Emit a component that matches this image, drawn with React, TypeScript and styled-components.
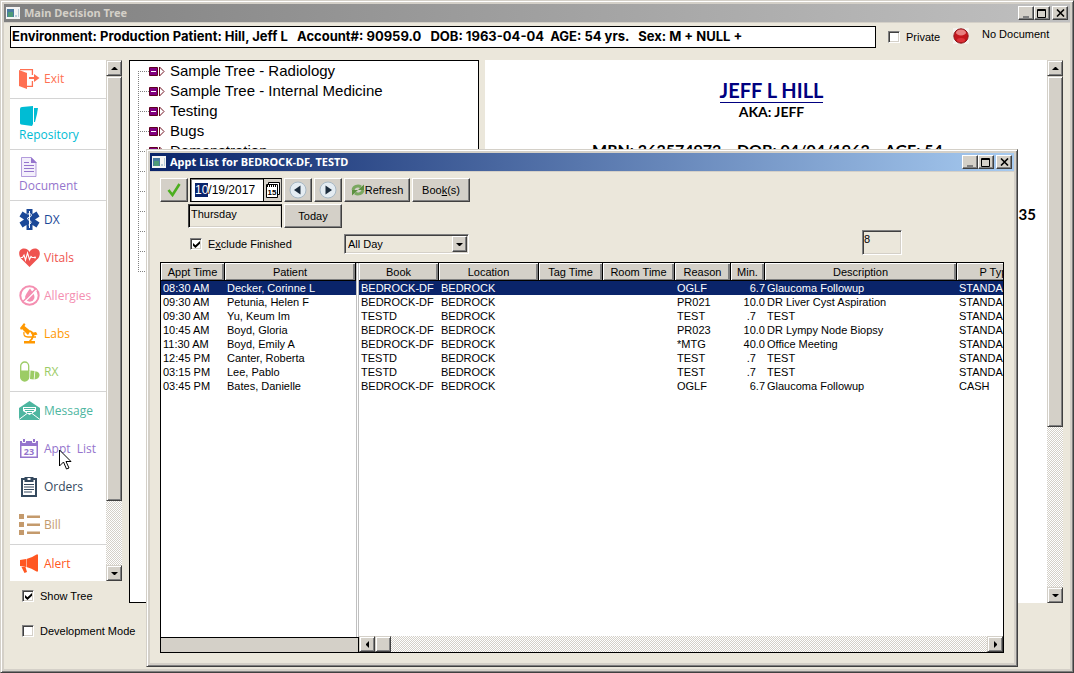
import React, { useEffect, useRef } from 'react';
import styled, { createGlobalStyle, css } from 'styled-components';

const face = '#d4d0c8';
const ground = '#ebe7db';
const navy = '#0a246a';
const sans = '"Liberation Sans", Arial, sans-serif';
const humanist = '"Open Sans", "Noto Sans", sans-serif';

const GlobalStyle = createGlobalStyle`
  * { box-sizing: border-box; }
  body { margin: 0; background: ${ground}; font: 11px/14px ${sans}; color: #000; }
  button, input, select { font: inherit; color: inherit; margin: 0; }
`;

const raised = css`
  border: 1px solid;
  border-color: #fff #404040 #404040 #fff;
  box-shadow: inset -1px -1px #808080;
`;
const raisedSoft = css`
  border: 1px solid;
  border-color: ${face} #404040 #404040 ${face};
  box-shadow: inset 1px 1px #fff, inset -1px -1px #808080;
`;
const sunken = css`
  border: 1px solid;
  border-color: #808080 #fff #fff #808080;
  box-shadow: inset 1px 1px #404040, inset -1px -1px ${face};
`;

const Frame = styled.div`
  display: flex;
  flex-direction: column;
  background: ${ground};
  padding: 3px;
  border: 1px solid;
  border-color: ${face} #404040 #404040 ${face};
  box-shadow: inset 1px 1px #fff, inset -1px -1px #808080, inset 0 0 0 3px ${face};
`;
const MainWindow = styled(Frame)`
  height: 100vh;
  position: relative;
`;
const Dialog = styled(Frame)`
  position: absolute;
  left: 145px;
  right: 55px;
  top: 148px;
  bottom: 5px;
`;

const TitleBar = styled.header<{ $active?: boolean }>`
  display: flex;
  align-items: center;
  height: 19px;
  flex: none;
  padding: 0 2px;
  border-bottom: 1px solid ${face};
  background: ${p => (p.$active ? `linear-gradient(90deg, ${navy}, #a6caf0)` : 'linear-gradient(90deg, #808080, #c0c0c0)')};
  color: ${p => (p.$active ? '#fff' : face)};
`;
const TitleText = styled.h1`
  flex: 1;
  margin: 0 0 0 4px;
  font: bold 11px/18px "Noto Sans", "Open Sans", sans-serif;
`;
const CaptionButton = styled.button`
  width: 16px;
  height: 14px;
  padding: 0;
  background: ${face};
  display: grid;
  place-items: center;
  ${raised}
  &:last-child { margin-left: 2px; }
`;

const TopRow = styled.div`
  display: flex;
  align-items: flex-start;
  padding: 3px 6px 0;
  height: 37px;
  flex: none;
`;
const Banner = styled.output`
  width: 866px;
  flex: 0 1 auto;
  height: 22px;
  border: 1px solid #000;
  background: #fff;
  font: bold 13px/18px Inter, "Liberation Sans", sans-serif;
  padding-left: 1px;
  white-space: pre;
  overflow: hidden;
`;
const CheckLabel = styled.label`
  display: flex;
  align-items: center;
  gap: 6px;
  height: 22px;
  white-space: nowrap;
`;
const CheckBox = styled.input`
  appearance: none;
  width: 12px;
  height: 12px;
  flex: none;
  background: #fff;
  position: relative;
  ${sunken}
  &:checked::after {
    content: '';
    position: absolute;
    inset: 2px 1px 1px 2px;
    background: #000;
    clip-path: polygon(0 28%, 35% 60%, 100% 0, 100% 40%, 35% 100%, 0 68%);
  }
`;
const PrivateLabel = styled(CheckLabel)`
  width: 65px;
  margin-left: 12px;
`;
const Lamp = styled.svg`
  margin: 2px 13px 0 0;
  flex: none;
`;
const Status = styled.span`
  line-height: 16px;
  white-space: nowrap;
`;

const Workspace = styled.div`
  flex: 1;
  min-height: 0;
  display: grid;
  grid-template-columns: 112px 350px 1fr;
  padding: 0 7px 0 6px;
`;
const Side = styled.aside`
  display: flex;
  flex-direction: column;
  min-height: 0;
  padding-bottom: 27px;
`;
const SideScroller = styled.div`
  flex: 1;
  min-height: 0;
  display: flex;
  background: #fff;
`;
const Nav = styled.nav`
  flex: 1;
  overflow: hidden;
`;
const NavGroup = styled.div`
  border-bottom: 1px solid #d4d4d4;
`;
const NavItem = styled.a<{ $tone: string; $stacked?: boolean }>`
  display: flex;
  flex-direction: ${p => (p.$stacked ? 'column' : 'row')};
  align-items: ${p => (p.$stacked ? 'flex-start' : 'center')};
  justify-content: ${p => (p.$stacked ? 'flex-end' : 'flex-start')};
  gap: ${p => (p.$stacked ? '0' : '4px')};
  height: ${p => (p.$stacked ? '50px' : '38px')};
  padding: 0 0 ${p => (p.$stacked ? '6px' : '1px')} 9px;
  color: ${p => p.$tone};
  font: 12px/16px ${humanist};
  text-decoration: none;
  white-space: pre;
  svg { flex: none; }
`;
const SideChecks = styled.div`
  display: flex;
  flex-direction: column;
  gap: 13px;
  padding: 4px 0 0 12px;
`;

const ScrollBox = styled.div<{ $row?: boolean }>`
  display: flex;
  flex: none;
  flex-direction: ${p => (p.$row ? 'row' : 'column')};
  ${p => (p.$row ? 'height: 16px;' : 'width: 16px;')}
  background: conic-gradient(#fff 25%, ${face} 0 50%, #fff 0 75%, ${face} 0) 0 0 / 2px 2px;
`;
const ScrollButton = styled.button`
  width: 16px;
  height: 16px;
  flex: none;
  padding: 0;
  display: grid;
  place-items: center;
  background: ${face};
  ${raisedSoft}
`;
const Thumb = styled.div<{ $grow: number; $base?: number }>`
  flex: ${p => p.$grow} 0 ${p => p.$base ?? 0}px;
  background: ${face};
  ${raisedSoft}
`;
const Rest = styled.div<{ $grow: number }>`
  flex: ${p => p.$grow} 0 0;
`;

const TreePanel = styled.ul`
  margin: 0 -7px 66px 7px;
  padding: 0 0 0 8px;
  list-style: none;
  background: #fff;
  border: 1px solid #000;
  overflow: hidden;
`;
const TreeRow = styled.li`
  display: flex;
  align-items: center;
  height: 20px;
  font: 15px/20px ${sans};
  gap: 4px;
  svg { flex: none; }
`;
const DocPanel = styled.section`
  margin: 0 0 66px 13px;
  background: #fff;
  display: flex;
  min-width: 0;
`;
const DocPage = styled.article`
  flex: 1;
  overflow: hidden;
  padding: 16px 0 0 11px;
  text-align: center;
  font: bold 14px/20px Lato, ${humanist};
  white-space: pre;
  h2 { margin: 0; font-size: 20px; line-height: 28px; color: #000080; }
  h2 span { border-bottom: 1px solid #000080; }
  p { margin: 0; line-height: 16px; }
`;
const DocIds = styled.p`
  && { margin: 18px 0 0; font-size: 16px; line-height: 24px; padding-right: 8px; }
`;
const DocPhone = styled.p`
  && { margin: 42px 11px 0 0; font-size: 15px; line-height: 20px; text-align: right; }
`;

const DialogBody = styled.div`
  flex: 1;
  min-height: 0;
  display: flex;
  flex-direction: column;
  padding: 6px 10px 10px;
`;
const Tools = styled.div`
  display: grid;
  grid-template-columns: 28px 92px 28px 28px 66px 58px 1fr;
  grid-template-rows: 24px 24px 26px;
  gap: 2px;
  margin-bottom: 6px;
`;
const ToolButton = styled.button<{ $span?: number }>`
  grid-column: span ${p => p.$span ?? 1};
  background: ${face};
  padding: 0;
  display: flex;
  align-items: center;
  justify-content: center;
  ${raised}
`;
const DateField = styled.div`
  display: flex;
  align-items: center;
  background: #fff;
  border: 1px solid #000;
  border-right-color: #404040;
  box-shadow: inset 1px 1px #808080;
`;
const DateInput = styled.input`
  flex: 1;
  min-width: 0;
  height: 20px;
  padding: 0 0 0 4px;
  border: 0;
  background: none;
  outline: 0;
  caret-color: transparent;
  font-size: 12px;
  &::selection { background: ${navy}; color: #fff; }
`;
const PickerButton = styled.button`
  width: 18px;
  height: 22px;
  padding: 0 0 0 1px;
  background: ${face};
  border: 0;
  border-left: 1px solid #000;
  display: grid;
  place-items: center;
`;
const DayName = styled.input`
  grid-column: 2;
  justify-self: end;
  width: 94px;
  background: ${ground};
  padding: 0 2px 4px;
  outline: 0;
  border: 1px solid;
  border-color: #404040 #000 #fff #404040;
  box-shadow: inset 1px 1px #000, inset -1px -1px ${face};
`;
const Exclude = styled(CheckLabel)`
  grid-column: 2 / span 3;
  padding-top: 2px;
  height: 26px;
`;
const RangeBox = styled.div`
  grid-column: 5 / span 2;
  display: flex;
  align-self: end;
  height: 20px;
  margin: 0 1px 2px 0;
  position: relative;
  ${sunken}
`;
const RangeSelect = styled.select`
  appearance: none;
  flex: 1;
  border: 0;
  padding: 0 20px 0 3px;
  background: none;
  outline: 0;
`;
const RangeArrow = styled.span`
  position: absolute;
  top: 1px;
  right: 1px;
  bottom: 1px;
  width: 15px;
  display: grid;
  place-items: center;
  background: ${face};
  pointer-events: none;
  ${raised}
`;
const Count = styled.input`
  justify-self: end;
  margin-right: 102px;
  width: 40px;
  height: 25px;
  padding: 0 1px 7px;
  background: ${ground};
  outline: 0;
  ${sunken}
`;

const Grid = styled.div`
  flex: 1;
  min-height: 0;
  display: flex;
  border: 1px solid #000;
  background: #fff;
`;
const FrozenPane = styled.div`
  width: 198px;
  flex: none;
  display: flex;
  flex-direction: column;
  justify-content: space-between;
  background: linear-gradient(90deg, transparent 195px, #c0c0c0 195px 196px, #fff 196px 197px, #c0c0c0 197px);
`;
const FrozenFoot = styled.div`
  height: 15px;
  background: ${face};
  border-top: 1px solid #000;
  border-right: 1px solid #000;
`;
const ScrollPane = styled.div`
  flex: 1;
  min-width: 0;
  overflow: hidden;
  display: flex;
  flex-direction: column;
  justify-content: space-between;
`;
const Table = styled.table<{ $width: number }>`
  table-layout: fixed;
  border-collapse: separate;
  border-spacing: 0;
  width: ${p => p.$width}px;
`;
const Th = styled.th`
  height: 18px;
  padding: 0;
  font-weight: normal;
  background: ${face};
  border-right: 1px solid #000;
  border-bottom: 1px solid #000;
  box-shadow: inset 1px 1px #fff, inset -2px -1px #808080;
  white-space: nowrap;
`;
const Tr = styled.tr<{ $selected: boolean }>`
  background: ${p => (p.$selected ? navy : 'transparent')};
  color: ${p => (p.$selected ? '#fff' : '#000')};
`;
const Td = styled.td<{ $right?: boolean }>`
  height: 14px;
  padding: ${p => (p.$right ? '0' : '0 0 0 2px')};
  text-align: ${p => (p.$right ? 'right' : 'left')};
  white-space: pre;
  overflow: hidden;
`;
const Pointer = styled.svg`
  position: absolute;
  left: 57px;
  top: 448px;
  pointer-events: none;
`;

type Dir = 'up' | 'down' | 'left' | 'right';
const arrows: Record<Dir, string> = {
  up: 'M0 5h7L4 2H3z',
  down: 'M0 2h7L4 5H3z',
  left: 'M5 0v7L2 4V3z',
  right: 'M2 0v7l3-3V3z',
};
const Arrow = ({ dir }: { dir: Dir }) => (
  <svg width="7" height="7" aria-hidden="true"><path d={arrows[dir]} /></svg>
);

const ScrollBar = ({ thumb, rest, row }: { thumb: number; rest: number; row?: boolean }) => (
  <ScrollBox $row={row}>
    <ScrollButton aria-label={row ? 'Scroll left' : 'Scroll up'}><Arrow dir={row ? 'left' : 'up'} /></ScrollButton>
    <Thumb $grow={row ? 0 : thumb} $base={row ? thumb : 0} />
    <Rest $grow={rest} />
    <ScrollButton aria-label={row ? 'Scroll right' : 'Scroll down'}><Arrow dir={row ? 'right' : 'down'} /></ScrollButton>
  </ScrollBox>
);

const Caption = ({ title, active }: { title: string; active?: boolean }) => (
  <TitleBar $active={active}>
    <svg width="14" height="12" aria-hidden="true">
      <path fill="#f4f4f4" d="M0 0h14v12H0z" />
      <path fill="#4a7ba0" d="M1 2h7v8H1z" />
      <path fill="#4e9a78" d="M2 5h5v5H2z" />
      <path fill="#b8ccd8" d="M9 8h2v2H9zM12 2h1v8h-1z" />
    </svg>
    <TitleText>{title}</TitleText>
    <CaptionButton aria-label="Minimize"><svg width="10" height="9"><path fill="#808080" d="M2 7h6v2H2z" /></svg></CaptionButton>
    <CaptionButton aria-label="Maximize"><svg width="10" height="9"><path fill="none" stroke="#000" d="M.5.5h8v8h-8zM0 1.5h9" /></svg></CaptionButton>
    <CaptionButton aria-label="Close"><svg width="9" height="8"><path fill="none" stroke="#000" strokeWidth="1.6" d="M1 .5l7 7M8 .5l-7 7" /></svg></CaptionButton>
  </TitleBar>
);

const icon = { width: 21, height: 21, viewBox: '0 0 21 21', fill: 'currentColor', 'aria-hidden': true } as const;

const ExitIcon = () => (
  <svg {...icon}>
    <path d="M0 2l8 3v16l-8-3z" />
    <path fill="none" stroke="currentColor" strokeWidth="1.3" d="M1 1.6h12.4V7M13.4 13v5.4H8" />
    <path d="M10 9h5V6l5.500 4-5.500 4v-3h-5z" />
  </svg>
);
const RepositoryIcon = () => (
  <svg {...icon}>
    <path d="M1 3Q1 1 3 1L14 0v18l-1 2-11-1.500Q1 18 1 17z" />
    <path d="M15 2h4l-1 6-2 8h-1z" />
  </svg>
);
const DocumentIcon = () => (
  <svg {...icon}>
    <path fill="#f3effb" stroke="currentColor" strokeOpacity=".7" d="M2.500.5h9.500l5 5V19.500H2.500z" />
    <path d="M12 0l6 6h-6z" />
    <path stroke="currentColor" d="M5 5.500h5M5 8.500h10M5 11.500h10M5 14.500h10" />
  </svg>
);
const DxIcon = () => (
  <svg {...icon}>
    <path d="M7.500 0h6v5l4-2.500 3 5-4.500 3 4.500 3-3 5-4-2.500v5h-6v-5l-4 2.500-3-5 4.500-3-4.500-3 3-5 4 2.500z" />
    <path fill="none" stroke="#fff" strokeWidth="1" d="M10.500 2v17M8.500 5q4-1 4 1t-4 3q0 2 2 2.500t1.500 2.500l-2.500 2" />
  </svg>
);
const VitalsIcon = () => (
  <svg {...icon}>
    <path d="M10.500 20L1.500 11C-1 7 0 1.500 5 1.500q4 0 5.500 3.500Q12 1.500 16 1.500c5 0 6 5.500 3.500 9.500z" />
    <path fill="none" stroke="#fff" strokeWidth="1.100" d="M1.500 10.500h2L5 8l1.500 5L8.500 6l2 6.500L12 9.500l1 1h3" />
    <circle cx="16" cy="10.500" r="1" fill="#fff" />
  </svg>
);
const AllergyIcon = () => (
  <svg {...icon}>
    <circle cx="10.500" cy="10.500" r="9.200" fill="none" stroke="currentColor" strokeWidth="2" />
    <path d="M11 3.500q4.500 6 4.500 8.500a4.700 4.700 0 0 1-9.400 0Q6.500 9.500 11 3.500z" />
    <path stroke="#fff" strokeWidth="1.500" d="M5.500 17L17.500 5" />
    <path stroke="currentColor" strokeWidth="1.400" d="M4 16.500L16.500 4" />
  </svg>
);
const LabsIcon = () => (
  <svg {...icon}>
    <path d="M5 0l1.500 1.500L5.500 3l6 5-2.500 4L3 6 2 7 1 5z" />
    <path fill="none" stroke="currentColor" strokeWidth="1.800" d="M11 8q4 2 3 5.500T10.500 18" />
    <path fill="none" stroke="currentColor" strokeWidth="1.300" d="M5 9q-1 5 4 5h8" />
    <path d="M12 10l5-1 1.500 2.500-5 1.500zM5 18h11v2.500H5z" />
  </svg>
);
const RxIcon = () => (
  <svg {...icon}>
    <path fill="none" stroke="currentColor" strokeWidth="1.300" d="M1.700 10V5a4 4 0 0 1 8 0v5" />
    <path d="M1 9.500h9.400V16a4.700 4.700 0 0 1-9.400 0z" />
    <path d="M11.500 9.500l4 .5-.8 8.500-3.700-.5zM16.300 10.200q4.700.8 4.200 4.300t-5 4z" />
  </svg>
);
const MessageIcon = () => (
  <svg {...icon}>
    <path d="M0 8l10.500-7L21 8v12H0z" />
    <path fill="#fff" d="M4 7h13v4l-6.500 4L4 11z" />
    <path stroke="currentColor" d="M5 8.500h11M6 10.500h9M8 12.500h5" />
    <path fill="none" stroke="#fff" d="M0 19.500l8-6M21 19.500l-8-6" />
  </svg>
);
const CalendarIcon = () => (
  <svg {...icon}>
    <path fillRule="evenodd" d="M1 3h18v17H1zM2.500 8v10.500h15V8z" />
    <path stroke="#fff" strokeWidth="1" fill="currentColor" d="M3.500.5h3v4h-3zM13.500.5h3v4h-3z" />
    <text x="10" y="17" fontSize="9" fontWeight="bold" fontFamily="Open Sans" textAnchor="middle">23</text>
  </svg>
);
const OrdersIcon = () => (
  <svg {...icon}>
    <path fill="#fff" stroke="currentColor" strokeWidth="2" d="M3 3h14v17H3z" />
    <path d="M5.500 1h9v5h-9z" /><path fill="#fff" d="M8.500 2h3v2h-3z" />
    <path stroke="currentColor" strokeWidth="1.200" d="M5 8.500h10M5 11h10M5 13.500h10M5 16h8" />
  </svg>
);
const BillIcon = () => (
  <svg {...icon}>
    <path d="M0 0h5v5H0zM0 8h5v5H0zM0 16h5v5H0zM8 1.500h13v2.500H8zM8 9.500h13v2.500H8zM8 17.500h13V20H8z" />
  </svg>
);
const AlertIcon = () => (
  <svg {...icon}>
    <path d="M1 7l6-1v8l-6-1zM7.500 6q5-1 10-4.500H19v17h-1.500q-5-3.500-10-4.500zM2.500 14H6.500l1.500 5-2.500 1z" />
  </svg>
);

const Node = () => (
  <svg width="28" height="20" aria-hidden="true">
    <path stroke="#808080" strokeDasharray="1 1" d="M0 10.500h11" />
    <path fill="#800080" stroke="#600020" d="M11.500 6.500h8v8h-8z" />
    <path stroke="#fff" d="M13 10.500h5" />
    <path fill="#fff" stroke="#701020" d="M21.500 6v9l4.500-4.500z" />
  </svg>
);
const TreeLine = styled.span<{ $first?: boolean; $last?: boolean }>`
  align-self: ${p => (p.$first ? 'flex-end' : 'flex-start')};
  width: 1px;
  height: ${p => (p.$first || p.$last ? '10px' : '20px')};
  margin-right: -5px;
  background: repeating-linear-gradient(#808080 0 1px, #fff 1px 2px);
`;

const branches = ['Sample Tree - Radiology', 'Sample Tree - Internal Medicine', 'Testing', 'Bugs', 'Demonstration', '', '', '', '', '', ''];

const appts = [
  ['08:30 AM', 'Decker, Corinne L', 'BEDROCK-DF', 'BEDROCK', 'OGLF', '6.7', 'Glaucoma Followup', 'STANDARD'],
  ['09:30 AM', 'Petunia, Helen F', 'BEDROCK-DF', 'BEDROCK', 'PR021', '10.0', 'DR Liver Cyst Aspiration', 'STANDARD'],
  ['09:30 AM', 'Yu, Keum Im', 'TESTD', 'BEDROCK', 'TEST', '.7   ', 'TEST', 'STANDARD'],
  ['10:45 AM', 'Boyd, Gloria', 'BEDROCK-DF', 'BEDROCK', 'PR023', '10.0', 'DR Lympy Node Biopsy', 'STANDARD'],
  ['11:30 AM', 'Boyd, Emily A', 'BEDROCK-DF', 'BEDROCK', '*MTG', '40.0', 'Office Meeting', 'STANDARD'],
  ['12:45 PM', 'Canter, Roberta', 'TESTD', 'BEDROCK', 'TEST', '.7   ', 'TEST', 'STANDARD'],
  ['03:15 PM', 'Lee, Pablo', 'TESTD', 'BEDROCK', 'TEST', '.7   ', 'TEST', 'STANDARD'],
  ['03:45 PM', 'Bates, Danielle', 'BEDROCK-DF', 'BEDROCK', 'OGLF', '6.7', 'Glaucoma Followup', 'CASH'],
];
const columns: [string, number][] = [
  ['Book', 80], ['Location', 100], ['Tag Time', 64], ['Room Time', 72],
  ['Reason', 56], ['Min.', 34], ['Description', 192], ['P Type', 80],
];

const RoundArrow = ({ flip }: { flip?: boolean }) => (
  <svg width="18" height="18" viewBox="0 0 18 18" aria-hidden="true">
    <circle cx="9" cy="9" r="8" fill="#e4ecf2" stroke="#a8b8c4" />
    <path fill="#1c2c3c" d={flip ? 'M6.500 4.500v9L13 9z' : 'M11.500 4.500v9L5 9z'} />
  </svg>
);

export default function App() {
  const date = useRef<HTMLInputElement>(null);
  useEffect(() => {
    date.current?.focus();
    date.current?.setSelectionRange(0, 2);
  }, []);

  return (
    <MainWindow>
      <GlobalStyle />
      <Caption title="Main Decision Tree" />
      <TopRow>
        <Banner>Environment: Production Patient: Hill, Jeff L   Account#: 90959.0   DOB: 1963-04-04  AGE: 54 yrs.   Sex: M + NULL +</Banner>
        <PrivateLabel><CheckBox type="checkbox" />Private</PrivateLabel>
        <Lamp width="16" height="16" aria-hidden="true">
          <path fill="#f4f2ee" d="M0 0h16v16H0z" />
          <circle cx="8" cy="8" r="7.200" fill="#c4161c" stroke="#8a1a1c" />
          <ellipse cx="8" cy="4.500" rx="5" ry="3" fill="#e88080" />
          <ellipse cx="8" cy="12" rx="4" ry="2" fill="#dc3038" />
        </Lamp>
        <Status>No Document</Status>
      </TopRow>

      <Workspace>
        <Side>
          <SideScroller>
            <Nav>
              <NavGroup><NavItem href="#exit" $tone="#ff7052"><ExitIcon />Exit</NavItem></NavGroup>
              <NavGroup><NavItem href="#repository" $tone="#00bcd4" $stacked><RepositoryIcon />Repository</NavItem></NavGroup>
              <NavGroup><NavItem href="#document" $tone="#9575cd" $stacked><DocumentIcon />Document</NavItem></NavGroup>
              <NavGroup>
                <NavItem href="#dx" $tone="#1b4898"><DxIcon />DX</NavItem>
                <NavItem href="#vitals" $tone="#ef5350"><VitalsIcon />Vitals</NavItem>
                <NavItem href="#allergies" $tone="#f48fb1"><AllergyIcon />Allergies</NavItem>
                <NavItem href="#labs" $tone="#ff9800"><LabsIcon />Labs</NavItem>
                <NavItem href="#rx" $tone="#9ccc65"><RxIcon />RX</NavItem>
              </NavGroup>
              <NavGroup>
                <NavItem href="#message" $tone="#4db6a0"><MessageIcon />Message</NavItem>
                <NavItem href="#appts" $tone="#9575cd"><CalendarIcon />{'Appt  List'}</NavItem>
                <NavItem href="#orders" $tone="#34495e"><OrdersIcon />Orders</NavItem>
                <NavItem href="#bill" $tone="#c49a6c"><BillIcon />Bill</NavItem>
              </NavGroup>
              <NavItem href="#alert" $tone="#ff5722"><AlertIcon />Alert</NavItem>
            </Nav>
            <ScrollBar thumb={425} rest={64} />
          </SideScroller>
          <SideChecks>
            <CheckLabel><CheckBox type="checkbox" defaultChecked />Show Tree</CheckLabel>
            <CheckLabel><CheckBox type="checkbox" />Development Mode</CheckLabel>
          </SideChecks>
        </Side>

        <TreePanel>
          {branches.map((name, i) => (
            <TreeRow key={i}>
              <TreeLine $first={i === 0} $last={i === branches.length - 1} />
              <Node />
              {name}
            </TreeRow>
          ))}
        </TreePanel>

        <DocPanel>
          <DocPage>
            <h2><span>JEFF L HILL</span></h2>
            <p>AKA: JEFF</p>
            <DocIds>{'MRN: 363574973    DOB: 04/04/1963    AGE: 54'}</DocIds>
            <DocPhone>35</DocPhone>
          </DocPage>
          <ScrollBar thumb={350} rest={161} />
        </DocPanel>
      </Workspace>

      <Dialog role="dialog" aria-label="Appt List">
        <Caption title="Appt List for BEDROCK-DF, TESTD" active />
        <DialogBody>
          <Tools>
            <ToolButton aria-label="Accept">
              <svg width="14" height="14" aria-hidden="true"><path fill="none" stroke="#4cae20" strokeWidth="2.600" d="M1.500 7l4 5L12.500 1" /></svg>
            </ToolButton>
            <DateField>
              <DateInput ref={date} aria-label="Date" defaultValue="10/19/2017" />
              <PickerButton aria-label="Pick date">
                <svg width="14" height="16" aria-hidden="true">
                  <path fill="#fff" stroke="#000" d="M2.500.5h11v12h-11z" />
                  <path fill="#fff" stroke="#000" d="M.5 2.500h11v13H.5z" />
                  <path stroke="#000" strokeDasharray="1 1" strokeWidth="2" d="M1 4h10" />
                  <text x="6" y="13" fontSize="8" fontWeight="bold" textAnchor="middle">15</text>
                </svg>
              </PickerButton>
            </DateField>
            <ToolButton aria-label="Previous day"><RoundArrow /></ToolButton>
            <ToolButton aria-label="Next day"><RoundArrow flip /></ToolButton>
            <ToolButton>
              <svg width="14" height="14" viewBox="0 0 14 14" aria-hidden="true">
                <path fill="none" stroke="#7aa860" strokeWidth="3" d="M2 7a5 4.500 0 0 1 8-3M12 7a5 4.500 0 0 1-8 3" />
                <path fill="#5c9040" d="M13 1.500v5.500H7zM1 12.500V7h6z" />
              </svg>
              Refresh
            </ToolButton>
            <ToolButton><span>Boo<u>k</u>(s)</span></ToolButton>
            <span />
            <DayName aria-label="Day" defaultValue="Thursday" />
            <ToolButton $span={2}>Today</ToolButton>
            <span /><span /><span />
            <Exclude><CheckBox type="checkbox" defaultChecked /><span>E<u>x</u>clude Finished</span></Exclude>
            <RangeBox>
              <RangeSelect aria-label="Time of day"><option>All Day</option></RangeSelect>
              <RangeArrow><Arrow dir="down" /></RangeArrow>
            </RangeBox>
            <Count aria-label="Appointments" defaultValue="8" />
          </Tools>

          <Grid>
            <FrozenPane>
              <Table $width={195}>
                <colgroup><col width="64" /><col width="131" /></colgroup>
                <thead><tr><Th>Appt Time</Th><Th>Patient</Th></tr></thead>
                <tbody>
                  {appts.map((a, i) => (
                    <Tr key={i} $selected={i === 0}><Td>{a[0]}</Td><Td>{a[1]}</Td></Tr>
                  ))}
                </tbody>
              </Table>
              <FrozenFoot />
            </FrozenPane>
            <ScrollPane>
              <Table $width={678}>
                <colgroup>{columns.map(([name, w]) => <col key={name} width={w} />)}</colgroup>
                <thead><tr>{columns.map(([name]) => <Th key={name}>{name}</Th>)}</tr></thead>
                <tbody>
                  {appts.map((a, i) => (
                    <Tr key={i} $selected={i === 0}>
                      <Td>{a[2]}</Td><Td>{a[3]}</Td><Td /><Td /><Td>{a[4]}</Td>
                      <Td $right>{a[5]}</Td><Td>{a[6]}</Td><Td>{a[7]}</Td>
                    </Tr>
                  ))}
                </tbody>
              </Table>
              <ScrollBar row thumb={16} rest={1} />
            </ScrollPane>
          </Grid>
        </DialogBody>
      </Dialog>

      <Pointer width="14" height="22" aria-hidden="true">
        <path fill="#fff" stroke="#000" d="M1.500 1v16l4-4 3 7 2.500-1-3-6.500h5z" />
      </Pointer>
    </MainWindow>
  );
}
